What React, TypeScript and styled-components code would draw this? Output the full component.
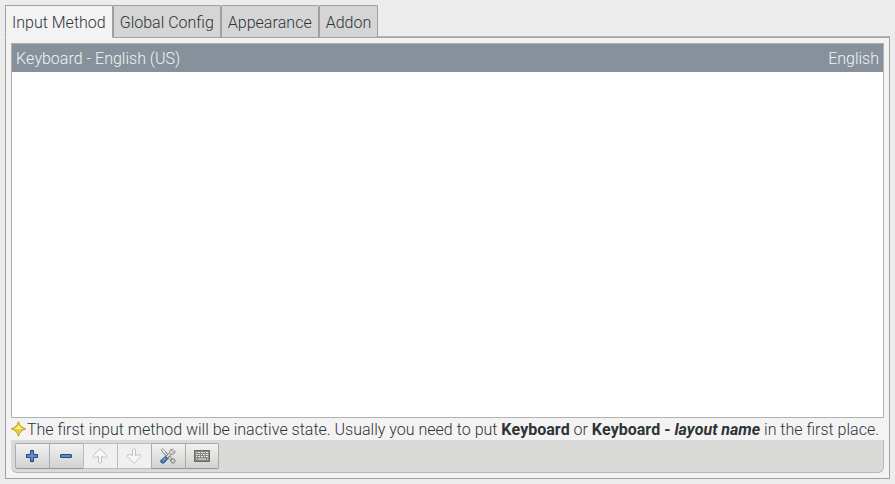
import React, { useState } from "react";
import styled, { createGlobalStyle } from "styled-components";

const GlobalStyle = createGlobalStyle`
  * { box-sizing: border-box; }
  body {
    margin: 0;
    background: #ececec;
    color: #2e3436;
    font-family: Roboto, "Liberation Sans", sans-serif;
    font-size: 16px;
    font-weight: 300;
    font-kerning: none;
    line-height: 20px;
  }
`;

const Window = styled.main`
  display: flex;
  flex-direction: column;
  min-height: 100vh;
  padding: 5px;
`;

const TabBar = styled.div`
  z-index: 1;
  display: flex;
  align-self: flex-start;
`;

const Tab = styled.button<{ $active: boolean }>`
  height: 33px;
  padding: 2px 6px 0;
  border: 1px solid #a0a0a0;
  border-bottom-color: ${(p) => (p.$active ? "#f3f3f3" : "#a0a0a0")};
  border-radius: 1px 1px 0 0;
  background: ${(p) => (p.$active ? "#f3f3f3" : "#d5d5d5")};
  color: inherit;
  font: inherit;
  font-kerning: none;
  white-space: nowrap;
`;

const Panel = styled.section`
  display: flex;
  flex: 1;
  flex-direction: column;
  margin-top: -1px;
  padding: 5px;
  border: 1px solid #a0a0a0;
  background: #f3f3f3;
  box-shadow: 0 -1px 0 #b9b7b3;
`;

const MethodList = styled.ul`
  flex: 1;
  margin: 0;
  padding: 0;
  border: 1px solid #b0b0ae;
  background: #fff;
  list-style: none;
`;

const MethodRow = styled.li`
  display: flex;
  justify-content: space-between;
  padding: 5px 4px 3px;
  background: #87919b;
  color: #f3f3f3;
`;

const Note = styled.p`
  display: flex;
  align-items: center;
  height: 22px;
  margin: 0;
  white-space: nowrap;

  b { font-weight: 700; }
`;

const NoteText = styled.span`
  padding-top: 2px;
`;

const Toolbar = styled.div`
  padding: 3px 4px;
  border: solid #b8b8b5;
  border-width: 0 1px 1px 0;
  border-radius: 0 0 6px 6px;
  background: #d9d9d7;
`;

const ButtonGroup = styled.div`
  display: flex;
`;

const ToolButton = styled.button`
  display: flex;
  align-items: center;
  justify-content: center;
  width: 34px;
  height: 26px;
  padding: 0 1px 0 0;
  border: 1px solid #aaaaa8;
  border-right-width: 0;
  border-bottom-color: #949492;
  background: linear-gradient(#f1f1f1, #d2d2d0);

  &:first-child { border-radius: 2px 0 0 2px; }
  &:last-child {
    padding: 0;
    border-right-width: 1px;
    border-radius: 0 2px 2px 0;
  }
  &:disabled {
    border-color: #bcbcba;
    background: #f0f0f0;
  }
`;

const Icon = styled.svg`
  display: block;
  flex: none;
  width: 16px;
  height: 16px;
`;

const StarIcon = () => (
  <Icon viewBox="0 0 16 16" aria-hidden="true">
    <path d="M7.5 .7C8.5 4.6 10.4 6.5 14.9 7.8C10.7 9 8.6 11 7.5 15.2C6.4 11 4.3 9 .3 7.8C4.5 6.5 6.5 4.6 7.5 .7Z" fill="#e7d140" stroke="#b99b16" />
    <path d="M7.5 3.5C8 5.8 9 7 11.7 7.7C9 8.1 6.5 8 3.7 7.7C6 7 7 5.7 7.5 3.5Z" fill="#fff3a0" />
  </Icon>
);

const AddIcon = () => (
  <Icon viewBox="0 0 16 16">
    <path d="M6.5 2.5h3v4h4v3h-4v4h-3v-4h-4v-3h4z" fill="#5580b8" stroke="#204a87" strokeLinejoin="round" />
    <path d="M8 4v8M4 8h8" stroke="#6f99cb" />
  </Icon>
);

const RemoveIcon = () => (
  <Icon viewBox="0 0 16 16">
    <rect x="2.5" y="6.5" width="11" height="3" rx=".5" fill="#5580b8" stroke="#204a87" />
    <path d="M4 8h8" stroke="#6f99cb" />
  </Icon>
);

const ArrowIcon = ({ down = false }: { down?: boolean }) => (
  <Icon viewBox="0 0 16 16">
    <path
      d={down
        ? "M6.5 1.5Q8 -.4 9.5 1.5V7.5L12.5 6.5Q15.3 6.6 14.5 8.6L8.8 14.7Q8 15.8 7.2 14.7L1.5 8.6Q.7 6.6 3.5 6.5L6.5 7.5Z"
        : "M6.5 14.5Q8 16.4 9.5 14.5V8.5L12.5 9.5Q15.3 9.4 14.5 7.4L8.8 1.3Q8 .2 7.2 1.3L1.5 7.4Q.7 9.4 3.5 9.5L6.5 8.5Z"}
      fill="#f7f7f7"
      stroke="#c2c2c2"
      strokeLinejoin="round"
    />
  </Icon>
);

const ToolsIcon = () => (
  <Icon viewBox="0 0 16 16">
    <path d="M3 3L12.5 12.5" stroke="#777975" strokeWidth="3" />
    <path d="M1.2 1.5L2.7 .8L5.6 3.7L4.5 5.3L2.8 4.6Z" fill="#eeeeec" stroke="#858783" strokeWidth=".8" />
    <path d="M3.6 3.6L12 12" stroke="#eeeeec" strokeWidth="1.3" />
    <circle cx="13" cy="13" r="2.1" fill="#d5d7d2" stroke="#777975" />
    <path d="M7 9L11.5 4.5" stroke="#777975" strokeWidth="3" />
    <path d="M7 9L11.7 4.3" stroke="#eeeeec" strokeWidth="1.3" />
    <path d="M13.2 1.2C11 .5 9.2 2.5 9.9 4.6L11.4 6.1C13.7 6.8 15.6 5 14.9 2.8L12.9 4.4L11.5 3.1Z" fill="#eeeeec" stroke="#777975" strokeWidth=".8" />
    <path d="M5.5 8.4L7.8 10.7L4.2 14.7Q2.8 15.8 1.3 14.5T1.3 12Z" fill="#4c7dbb" stroke="#204a87" />
    <path d="M2.4 12.8L5.5 9.8" stroke="#8fb1d8" />
  </Icon>
);

const KeyboardIcon = () => (
  <Icon viewBox="0 0 16 16">
    <rect x=".5" y="2.5" width="15" height="11" fill="#858783" stroke="#696b67" />
    <path d="M2 4.5h1M4 4.5h2M7 4.5h2M10 4.5h1M12 4.5h2M2 6.5h2M5 6.5h1M7 6.5h1M9 6.5h2M12 6.5h2M2 8.5h1M4 8.5h2M7 8.5h2M10 8.5h1M12 8.5h2M2 11h1M4 11h8M13 11h1" stroke="#eeeeec" strokeWidth="1" />
  </Icon>
);

const tabs = ["Input Method", "Global Config", "Appearance", "Addon"];

const tools = [
  { label: "Add input method", icon: <AddIcon /> },
  { label: "Remove input method", icon: <RemoveIcon /> },
  { label: "Move up", icon: <ArrowIcon />, disabled: true },
  { label: "Move down", icon: <ArrowIcon down />, disabled: true },
  { label: "Configure", icon: <ToolsIcon /> },
  { label: "Keyboard layout", icon: <KeyboardIcon /> },
];

export default function App() {
  const [active, setActive] = useState(0);
  return (
    <>
      <GlobalStyle />
      <Window>
        <TabBar role="tablist">
          {tabs.map((name, i) => (
            <Tab
              key={name}
              type="button"
              role="tab"
              aria-selected={i === active}
              $active={i === active}
              onClick={() => setActive(i)}
            >
              {name}
            </Tab>
          ))}
        </TabBar>
        <Panel role="tabpanel" aria-label={tabs[active]}>
          <MethodList>
            <MethodRow>
              <span>Keyboard - English (US)</span>
              <span>English</span>
            </MethodRow>
          </MethodList>
          <Note>
            <StarIcon />
            <NoteText>
              The first input method will be inactive state. Usually you need to put <b>Keyboard</b> or{" "}
              <b>Keyboard - <i>layout name</i></b> in the first place.
            </NoteText>
          </Note>
          <Toolbar role="toolbar" aria-label="Input method actions">
            <ButtonGroup>
              {tools.map((tool) => (
                <ToolButton key={tool.label} type="button" aria-label={tool.label} disabled={tool.disabled}>
                  {tool.icon}
                </ToolButton>
              ))}
            </ButtonGroup>
          </Toolbar>
        </Panel>
      </Window>
    </>
  );
}
